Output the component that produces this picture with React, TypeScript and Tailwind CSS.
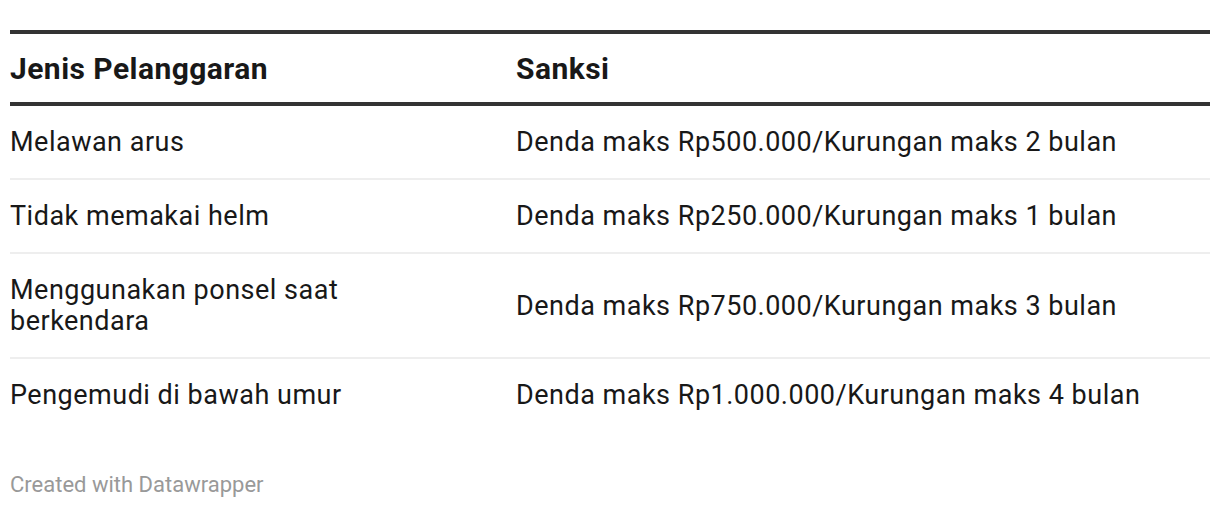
import React from "react";

const rows: { jenis: string; sanksi: string }[] = [
  { jenis: "Melawan arus", sanksi: "Denda maks Rp500.000/Kurungan maks 2 bulan" },
  { jenis: "Tidak memakai helm", sanksi: "Denda maks Rp250.000/Kurungan maks 1 bulan" },
  { jenis: "Menggunakan ponsel saat berkendara", sanksi: "Denda maks Rp750.000/Kurungan maks 3 bulan" },
  { jenis: "Pengemudi di bawah umur", sanksi: "Denda maks Rp1.000.000/Kurungan maks 4 bulan" },
];

export default function App() {
  return (
    <div className="w-[1220px] h-[508px] bg-white px-[10px] pt-[30px] font-['Roboto',sans-serif] text-[#181818]">
      <div className="border-t-4 border-[#333333]">
        <div className="flex border-b-4 border-[#333333] h-[72px] items-center text-[30px] leading-[31px] font-bold tracking-[0.45px]">
          <div className="w-[506px] shrink-0">Jenis Pelanggaran</div>
          <div>Sanksi</div>
        </div>
        {rows.map((r, i) => (
          <div
            key={r.jenis}
            className={
              "flex items-center pt-[21px] pb-[20px] text-[27px] leading-[31px] tracking-[0.5px] " +
              (i < rows.length - 1 ? "border-b-2 border-[#eeeeee]" : "")
            }
          >
            <div className="w-[506px] shrink-0 pr-[150px]">{r.jenis}</div>
            <div>{r.sanksi}</div>
          </div>
        ))}
      </div>
      <div className="mt-[41px] text-[22px] leading-[26px] text-[#999999]">Created with Datawrapper</div>
    </div>
  );
}
